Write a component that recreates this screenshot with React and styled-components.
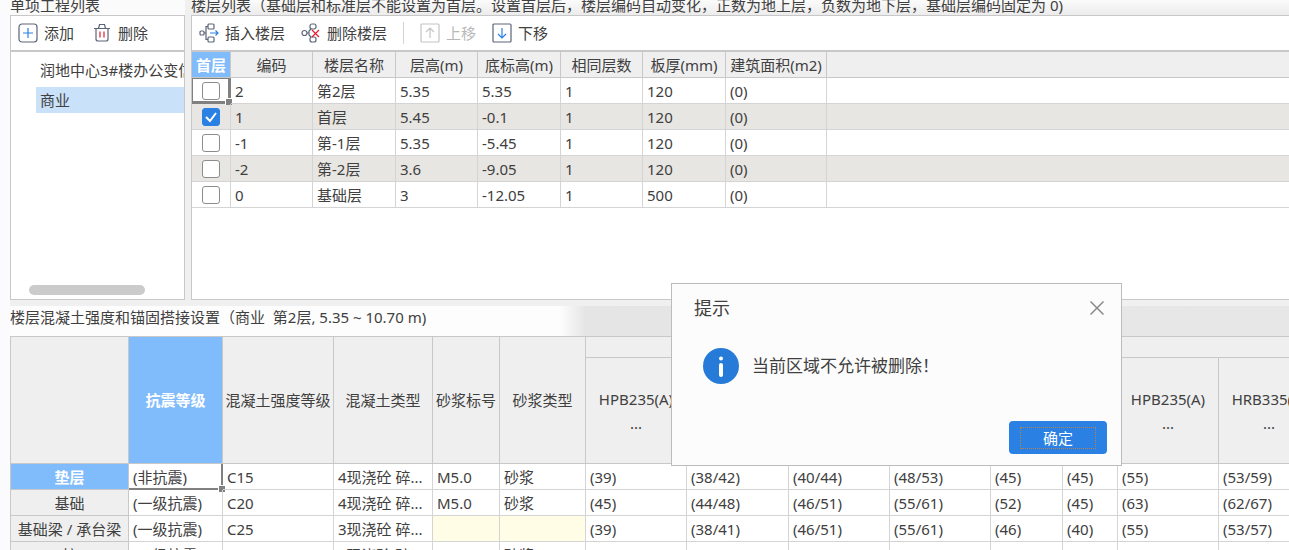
import React, { useState } from 'react';
import styled, { createGlobalStyle } from 'styled-components';

const floorColumns = [
  { title: '首层', width: 39, active: true },
  { title: '编码', width: 82 },
  { title: '楼层名称', width: 83 },
  { title: '层高(m)', width: 82 },
  { title: '底标高(m)', width: 83 },
  { title: '相同层数', width: 82 },
  { title: '板厚(mm)', width: 83 },
  { title: '建筑面积(m2)', width: 101 },
];

const floors = [
  { code: '2', name: '第2层', cells: ['5.35', '5.35', '1', '120', '(0)'] },
  { code: '1', name: '首层', cells: ['5.45', '-0.1', '1', '120', '(0)'] },
  { code: '-1', name: '第-1层', cells: ['5.35', '-5.45', '1', '120', '(0)'] },
  { code: '-2', name: '第-2层', cells: ['3.6', '-9.05', '1', '120', '(0)'] },
  { code: '0', name: '基础层', cells: ['3', '-12.05', '1', '500', '(0)'] },
];

const concreteColumns = [
  { title: '抗震等级', width: 94, active: true },
  { title: '混凝土强度等级', width: 111 },
  { title: '混凝土类型', width: 99 },
  { title: '砂浆标号', width: 67 },
  { title: '砂浆类型', width: 86 },
];

const anchorColumns = [
  { title: 'HPB235(A)', width: 101 },
  { title: 'HRB335(B)', width: 102 },
  { title: 'HRB400(C)', width: 101 },
  { title: 'HRB500(E)', width: 101 },
  { title: '冷轧带肋', width: 72 },
  { title: '冷轧扭', width: 55 },
];

const lapColumns = [
  { title: 'HPB235(A)', width: 101 },
  { title: 'HRB335(B)', width: 101 },
];

const members = [
  {
    name: '垫层',
    cells: ['(非抗震)', 'C15', '4现浇砼 碎...', 'M5.0', '砂浆', '(39)', '(38/42)', '(40/44)', '(48/53)', '(45)', '(45)', '(55)', '(53/59)'],
  },
  {
    name: '基础',
    cells: ['(一级抗震)', 'C20', '4现浇砼 碎...', 'M5.0', '砂浆', '(45)', '(44/48)', '(46/51)', '(55/61)', '(52)', '(45)', '(63)', '(62/67)'],
  },
  {
    name: '基础梁 / 承台梁',
    cells: ['(一级抗震)', 'C25', '3现浇砼 碎...', '', '', '(39)', '(38/41)', '(46/51)', '(55/61)', '(46)', '(40)', '(55)', '(53/57)'],
  },
  {
    name: '柱',
    cells: ['(一级抗震)', 'C25', '3现浇砼 碎...', 'M5.0', '砂浆', '(39)', '(38/41)', '(46/51)', '(55/61)', '(46)', '(40)', '(55)', '(53/57)'],
  },
];

const AddIcon = () => (
  <Icon viewBox="0 0 20 20">
    <rect x="1" y="1" width="18" height="18" rx="3" stroke="#5b6478" />
    <path d="M10 5v10M5 10h10" stroke="#2b80e4" />
  </Icon>
);

const TrashIcon = () => (
  <Icon viewBox="0 0 20 20">
    <path d="M2 5.500h16M6.500 5.500l1-4h5l1 4M4 5.500V16a2 2 0 0 0 2 2h8a2 2 0 0 0 2-2V5.500" stroke="#5b6478" />
    <path d="M8 8.500v6M12 8.500v6" stroke="#e0202c" />
  </Icon>
);

const InsertFloorIcon = () => (
  <Icon viewBox="0 0 20 20">
    <rect x="1" y="8" width="4" height="4" rx="1" stroke="#5b6478" />
    <rect x="9" y="1" width="6" height="5" rx="1" stroke="#5b6478" />
    <rect x="9" y="14" width="6" height="5" rx="1" stroke="#5b6478" />
    <path d="M5 10h2M9 3.500H7v13h2" stroke="#5b6478" />
    <path d="M11 10h8M16.500 7.500L19 10l-2.500 2.500" stroke="#2b80e4" />
  </Icon>
);

const DeleteFloorIcon = () => (
  <Icon viewBox="0 0 20 20">
    <circle cx="3.500" cy="10" r="2.500" stroke="#5b6478" />
    <rect x="9" y="1" width="6" height="5" rx="2" stroke="#5b6478" />
    <rect x="9" y="14" width="6" height="5" rx="2" stroke="#5b6478" />
    <path d="M6 10h2M10 6L8 8v4l2 2" stroke="#5b6478" />
    <path d="M11 7l7 7M18 7l-7 7" stroke="#e0202c" />
  </Icon>
);

const MoveIcon = ({ up }) => (
  <Icon viewBox="0 0 20 20">
    <rect x="1" y="1" width="18" height="18" rx="1" stroke={up ? '#c4c4c4' : '#5b6478'} />
    {up ? (
      <path d="M10 15V5M6 9l4-4 4 4" stroke="#c4c4c4" />
    ) : (
      <path d="M10 5v10M6 11l4 4 4-4" stroke="#2b80e4" />
    )}
  </Icon>
);

function FloorTable() {
  const [first, setFirst] = useState('1');

  return (
    <Table>
      <colgroup>
        {floorColumns.map((c) => (
          <Col key={c.title} $width={c.width} />
        ))}
        <col />
      </colgroup>
      <thead>
        <tr>
          {floorColumns.map((c) => (
            <Th key={c.title} $active={c.active}>
              {c.title}
            </Th>
          ))}
          <Th $last />
        </tr>
      </thead>
      <tbody>
        {floors.map((floor, i) => (
          <Row key={floor.code} $striped={i % 2 === 1}>
            <Td $center>
              <Checkbox
                type="checkbox"
                aria-label={`首层 ${floor.name}`}
                checked={first === floor.code}
                onChange={() => setFirst(floor.code)}
              />
              {i === 0 && <Selection $framed />}
            </Td>
            <Td>{floor.code}</Td>
            <Td>{floor.name}</Td>
            {floor.cells.map((value, n) => (
              <Td key={n}>{value}</Td>
            ))}
            <Td $last />
          </Row>
        ))}
      </tbody>
    </Table>
  );
}

function ConcreteTable() {
  return (
    <Table $fit>
      <colgroup>
        <Col $width={118} />
        {[...concreteColumns, ...anchorColumns, ...lapColumns].map((c, i) => (
          <Col key={i} $width={c.width} />
        ))}
      </colgroup>
      <thead>
        <GroupRow>
          <Th rowSpan={2} />
          {concreteColumns.map((c) => (
            <Th key={c.title} rowSpan={2} $active={c.active}>
              {c.title}
            </Th>
          ))}
          <Th colSpan={anchorColumns.length}>锚固</Th>
          <Th colSpan={lapColumns.length} />
        </GroupRow>
        <SteelRow>
          {[...anchorColumns, ...lapColumns].map((c, i) => (
            <Th key={i}>
              {c.title}
              <br />
              ...
            </Th>
          ))}
        </SteelRow>
      </thead>
      <tbody>
        {members.map((member, i) => (
          <tr key={member.name}>
            <Th scope="row" $active={i === 0}>
              {member.name}
            </Th>
            {member.cells.map((value, n) => (
              <Td key={n} $empty={!value}>
                {value}
                {i === 0 && n === 0 && <Selection />}
              </Td>
            ))}
          </tr>
        ))}
      </tbody>
    </Table>
  );
}

function App() {
  const [open, setOpen] = useState(true);

  return (
    <Page>
      <GlobalStyle />
      <Top>
        <ProjectColumn>
          <Caption>单项工程列表</Caption>
          <Panel>
            <Toolbar>
              <ToolButton>
                <AddIcon />
                添加
              </ToolButton>
              <ToolButton>
                <TrashIcon />
                删除
              </ToolButton>
            </Toolbar>
            <Projects>
              <Project>润地中心3#楼办公变信</Project>
              <Project $selected>商业</Project>
            </Projects>
            <ScrollThumb />
          </Panel>
        </ProjectColumn>
        <FloorColumn>
          <Caption $shaded>
            楼层列表（基础层和标准层不能设置为首层。设置首层后，楼层编码自动变化，正数为地上层，负数为地下层，基础层编码固定为 0)
          </Caption>
          <Panel $open>
            <Toolbar $tight>
              <ToolButton>
                <InsertFloorIcon />
                插入楼层
              </ToolButton>
              <ToolButton>
                <DeleteFloorIcon />
                删除楼层
              </ToolButton>
              <Separator />
              <ToolButton disabled>
                <MoveIcon up />
                上移
              </ToolButton>
              <ToolButton>
                <MoveIcon />
                下移
              </ToolButton>
            </Toolbar>
            <FloorTable />
          </Panel>
        </FloorColumn>
      </Top>
      <Bottom>
        <Heading>楼层混凝土强度和锚固搭接设置（商业&nbsp; 第2层, 5.35 ~ 10.70 m)</Heading>
        <ConcreteTable />
      </Bottom>
      {open && (
        <Dialog role="dialog" aria-labelledby="tip-title">
          <DialogHeader>
            <DialogTitle id="tip-title">提示</DialogTitle>
            <CloseButton aria-label="关闭" onClick={() => setOpen(false)}>
              <svg width="16" height="16" viewBox="0 0 16 16" fill="none" stroke="#8a8a8a" strokeWidth="1.500">
                <path d="M1.500 1.500l13 13M14.500 1.500l-13 13" />
              </svg>
            </CloseButton>
          </DialogHeader>
          <Message>
            <svg width="36" height="36" viewBox="0 0 36 36">
              <circle cx="18" cy="18" r="18" fill="#267bd8" />
              <circle cx="18" cy="10.500" r="2" fill="#fff" />
              <rect x="16" y="15" width="4" height="14" rx="2" fill="#fff" />
            </svg>
            当前区域不允许被删除！
          </Message>
          <DialogFooter>
            <OkButton onClick={() => setOpen(false)}>
              <Focus>确定</Focus>
            </OkButton>
          </DialogFooter>
        </Dialog>
      )}
    </Page>
  );
}

export default App;

const GlobalStyle = createGlobalStyle`
  * {
    box-sizing: border-box;
  }

  body {
    margin: 0;
    color: #404040;
    font: 15px/20px 'Noto Sans', 'Noto Sans CJK SC', sans-serif;
  }

  button {
    font: inherit;
    color: inherit;
  }
`;

const Page = styled.div`
  display: flex;
  flex-direction: column;
  height: 100vh;
  padding-left: 10px;
  overflow: hidden;
  background: #fbfbfd;
`;

const Top = styled.div`
  display: flex;
  flex: none;
  height: 306px;
  padding-bottom: 6px;
  background: #f0f0f0;
`;

const ProjectColumn = styled.section`
  display: flex;
  flex-direction: column;
  width: 175px;
  margin-right: 6px;
`;

const FloorColumn = styled.section`
  display: flex;
  flex: 1;
  flex-direction: column;
  min-width: 0;
`;

const Caption = styled.div`
  display: flex;
  align-items: flex-end;
  height: 15px;
  overflow: hidden;
  white-space: nowrap;
  background: ${(p) => (p.$shaded ? 'linear-gradient(#fbfbfb, #ececec)' : '#fbfbfb')};
`;

const Panel = styled.div`
  display: flex;
  flex: 1;
  flex-direction: column;
  min-height: 0;
  border: 1px solid #c8c8c8;
  border-right-width: ${(p) => (p.$open ? 0 : 1)}px;
  background: #fff;
`;

const Toolbar = styled.div`
  display: flex;
  align-items: center;
  gap: ${(p) => (p.$tight ? 16 : 18)}px;
  height: 36px;
  padding: 0 7px;
  border-bottom: 2px solid #c8c8c8;
`;

const ToolButton = styled.button`
  display: flex;
  align-items: center;
  gap: 6px;
  padding: 0;
  border: 0;
  background: none;
  white-space: nowrap;

  &:disabled {
    color: #b8b8b8;
  }
`;

const Icon = styled.svg`
  flex: none;
  width: 20px;
  height: 20px;
  fill: none;
  stroke-width: 1.2;
`;

const Separator = styled.span`
  width: 1px;
  height: 22px;
  background: #d4d4d4;
`;

const Projects = styled.ul`
  flex: 1;
  margin: 0;
  padding: 5px 0 0 25px;
  list-style: none;
`;

const Project = styled.li`
  height: ${(p) => (p.$selected ? 26 : 30)}px;
  padding-left: 4px;
  overflow: hidden;
  line-height: 26px;
  white-space: nowrap;
  background: ${(p) => (p.$selected ? '#cae1fa' : 'none')};
`;

const ScrollThumb = styled.div`
  width: 116px;
  height: 10px;
  margin: 0 0 4px 18px;
  border-radius: 5px;
  background: #cbcbcb;
`;

const Table = styled.table`
  width: ${(p) => (p.$fit ? 'max-content' : '100%')};
  min-width: 100%;
  table-layout: fixed;
  border-collapse: separate;
  border-spacing: 0;
`;

const Col = styled.col`
  width: ${(p) => p.$width}px;
`;

const Th = styled.th`
  height: 26px;
  padding: 0;
  overflow: hidden;
  border-right: ${(p) => (p.$last ? 0 : 1)}px solid #c8c8c8;
  border-bottom: 1px solid #c8c8c8;
  font-weight: ${(p) => (p.$active ? 700 : 400)};
  color: ${(p) => (p.$active ? '#fff' : 'inherit')};
  text-align: center;
  white-space: nowrap;
  background: ${(p) => (p.$active ? '#80bbfb' : '#efefef')};
`;

const Td = styled.td`
  position: relative;
  height: 26px;
  padding: ${(p) => (p.$center ? '0' : '0 0 0 4px')};
  border-right: ${(p) => (p.$last ? 0 : 1)}px solid #d4d4d4;
  border-bottom: 1px solid #d4d4d4;
  text-align: ${(p) => (p.$center ? 'center' : 'left')};
  white-space: nowrap;
  background: ${(p) => (p.$empty ? '#fffde6' : 'none')};
`;

const Row = styled.tr`
  background: ${(p) => (p.$striped ? '#e8e6e2' : '#fff')};
`;

const GroupRow = styled.tr`
  ${Th} {
    height: 21px;
    line-height: 16px;
  }
`;

const SteelRow = styled.tr`
  ${Th} {
    height: 106px;
    line-height: 24px;
  }
`;

// frame round the current cell, with the fill handle in its corner
const Selection = styled.span`
  position: absolute;
  inset: 0 -1px -1px 0;
  border: solid #808080;
  border-width: ${(p) => (p.$framed ? '1px 3px 3px 1px' : '0 2px 2px 0')};
  pointer-events: none;

  &::after {
    content: '';
    position: absolute;
    right: -4px;
    bottom: -4px;
    width: 6px;
    height: 6px;
    border: solid #fff;
    border-width: 1px 0 0 1px;
    background: #808080;
  }
`;

const Checkbox = styled.input`
  display: block;
  appearance: none;
  width: 18px;
  height: 18px;
  margin: 0 auto;
  border: 1px solid #8c8c8c;
  border-radius: 3px;
  background: #fff;

  &:checked {
    border-color: #2b80e4;
    background: #2b80e4
      url("data:image/svg+xml,%3Csvg xmlns='http://www.w3.org/2000/svg' viewBox='0 0 16 16'%3E%3Cpath d='M3 8l4 4 6-8' fill='none' stroke='white' stroke-width='2'/%3E%3C/svg%3E");
  }
`;

const Bottom = styled.section`
  flex: 1;
  min-height: 0;
  overflow: hidden;

  ${Table} {
    border-top: 1px solid #c8c8c8;
    border-left: 1px solid #c8c8c8;
    background: #fff;
  }
`;

const Heading = styled.h2`
  height: 30px;
  margin: 0;
  font-size: 15px;
  font-weight: 400;
  line-height: 22px;
  background: linear-gradient(90deg, #fdfdfd 43%, #e5e5e5 45%, #e8e7e7);
`;

const Dialog = styled.div`
  position: absolute;
  top: 283px;
  left: 671px;
  display: flex;
  flex-direction: column;
  width: 451px;
  height: 183px;
  padding: 14px 14px 11px;
  border: 1px solid #bcbcbc;
  background: #fcfcfc;
`;

const DialogHeader = styled.div`
  display: flex;
  align-items: center;
  justify-content: space-between;
  padding: 0 2px 0 8px;
`;

const DialogTitle = styled.h3`
  margin: 0;
  font-size: 18px;
  font-weight: 400;
`;

const CloseButton = styled.button`
  display: flex;
  padding: 0;
  border: 0;
  background: none;
`;

const Message = styled.div`
  display: flex;
  flex: 1;
  align-items: center;
  gap: 13px;
  padding: 0 0 8px 17px;
  font-size: 17px;
`;

const DialogFooter = styled.div`
  display: flex;
  justify-content: flex-end;
`;

const OkButton = styled.button`
  width: 98px;
  height: 33px;
  padding: 0;
  border: 0;
  border-radius: 4px;
  color: #fff;
  background: #2b80e4;
`;

const Focus = styled.span`
  display: block;
  margin: 0 11px;
  border: 1px dotted #b5824a;
`;
